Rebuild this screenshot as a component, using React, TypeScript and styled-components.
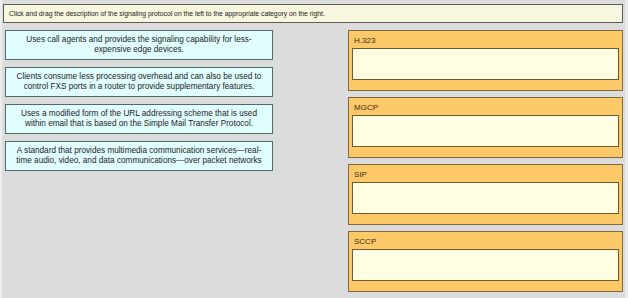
import React from "react";
import styled, { createGlobalStyle } from "styled-components";

const Global = createGlobalStyle`
  html, body { margin: 0; padding: 0; background: #dcdcdc; }
  body { font-family: "Liberation Sans", Arial, sans-serif; }
`;

const Page = styled.div`
  width: 628px;
  height: 298px;
  box-sizing: border-box;
  background: #dcdcdc;
  border-left: 2px solid #ededed;
  border-right: 3px solid #ececec;
  padding: 4px 2px 0 1px;
  overflow: hidden;
`;

const Instruction = styled.div`
  height: 19px;
  box-sizing: border-box;
  border: 1px solid #5c5c58;
  background: #f7f6de;
  color: #222;
  font-size: 6.8px;
  display: flex;
  align-items: center;
  padding-left: 5px;
  white-space: nowrap;
`;

const Main = styled.div`
  display: flex;
  justify-content: space-between;
  margin-top: 7px;
  padding-left: 2px;
`;

const LeftCol = styled.div`
  width: 268px;
  display: flex;
  flex-direction: column;
  gap: 7px;
`;

const Card = styled.div`
  height: 30px;
  box-sizing: border-box;
  border: 1px solid #4e6a6a;
  background: #e1feff;
  color: #222;
  font-size: 8.2px;
  line-height: 10px;
  text-align: center;
  display: flex;
  align-items: center;
  justify-content: center;
  padding: 0 4px;
  white-space: nowrap;
`;

const RightCol = styled.div`
  width: 275px;
  display: flex;
  flex-direction: column;
  gap: 6px;
`;

const Box = styled.div`
  height: 61px;
  box-sizing: border-box;
  border: 1px solid #7d6a3e;
  background: #fcc868;
  padding: 0 3px;
  display: flex;
  flex-direction: column;
`;

const Label = styled.div`
  height: 17px;
  font-size: 8px;
  color: #3a3020;
  display: flex;
  align-items: center;
  padding-left: 2px;
  padding-top: 1px;
  box-sizing: border-box;
`;

const Drop = styled.div`
  height: 32px;
  box-sizing: border-box;
  border: 1px solid #6e5c30;
  background: #fffde2;
`;

const cards = [
  ["Uses call agents and provides the signaling capability for less-", "expensive edge devices."],
  ["Clients consume less processing overhead and can also be used to", "control FXS ports in a router to provide supplementary features."],
  ["Uses a modified form of the URL addressing scheme that is used", "within email that is based on the Simple Mail Transfer Protocol."],
  ["A standard that provides multimedia communication services\u2014real-", "time audio, video, and data communications\u2014over packet networks"],
];

const categories = ["H.323", "MGCP", "SIP", "SCCP"];

export default function App() {
  return (
    <>
      <Global />
      <Page>
        <Instruction>
          Click and drag the description of the signaling protocol on the left to the appropriate category on the right.
        </Instruction>
        <Main>
          <LeftCol>
            {cards.map((c, i) => (
              <Card key={i}>
                <span>
                  {c[0]}
                  <br />
                  {c[1]}
                </span>
              </Card>
            ))}
          </LeftCol>
          <RightCol>
            {categories.map((c) => (
              <Box key={c}>
                <Label>{c}</Label>
                <Drop />
              </Box>
            ))}
          </RightCol>
        </Main>
      </Page>
    </>
  );
}
